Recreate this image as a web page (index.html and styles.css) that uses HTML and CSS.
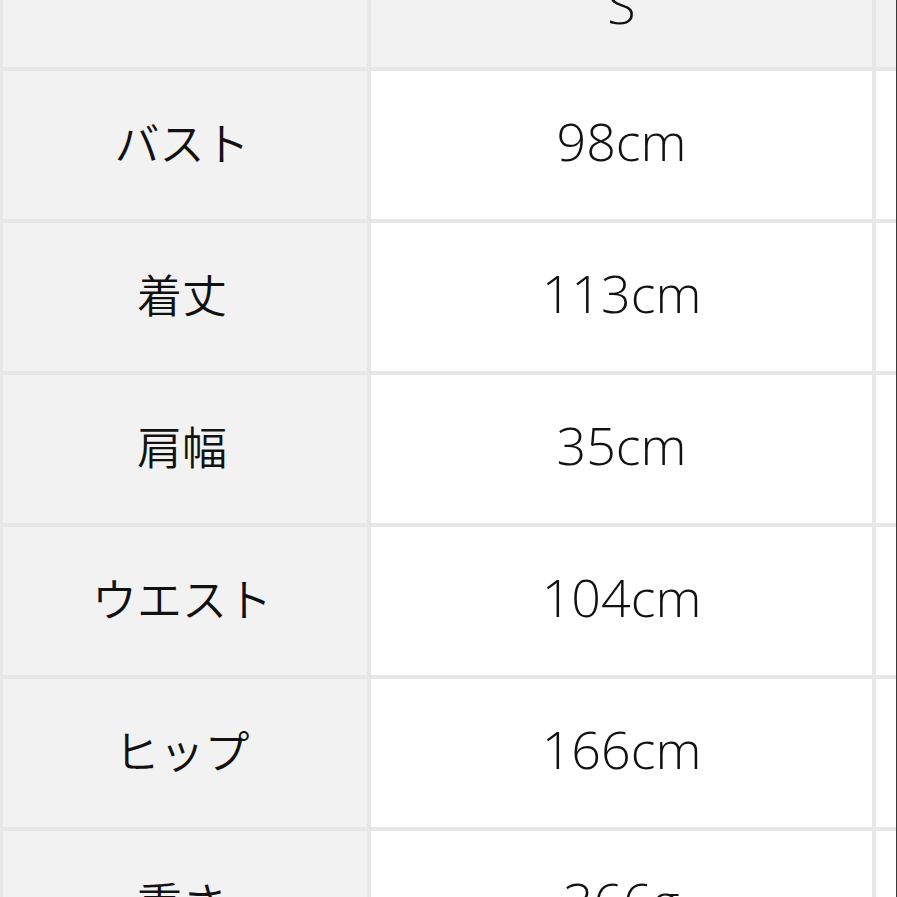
FILE: index.html
```html
<!DOCTYPE html>
<html lang="ja">
<head>
<meta charset="utf-8">
<title>サイズ表</title>
<link rel="stylesheet" href="styles.css">
</head>
<body>
<div class="sheet">
  <div class="cell label head"></div>
  <div class="cell value head">S</div>
  <div class="cell extra head"></div>

  <div class="cell label">バスト</div>
  <div class="cell value">98cm</div>
  <div class="cell extra"></div>

  <div class="cell label">着丈</div>
  <div class="cell value">113cm</div>
  <div class="cell extra"></div>

  <div class="cell label">肩幅</div>
  <div class="cell value">35cm</div>
  <div class="cell extra"></div>

  <div class="cell label">ウエスト</div>
  <div class="cell value">104cm</div>
  <div class="cell extra"></div>

  <div class="cell label">ヒップ</div>
  <div class="cell value">166cm</div>
  <div class="cell extra"></div>

  <div class="cell label">重さ</div>
  <div class="cell value">366g</div>
  <div class="cell extra"></div>
</div>
</body>
</html>
```

FILE: styles.css
```css
html, body {
  margin: 0;
  padding: 0;
  background: #ffffff;
  overflow: hidden;
  width: 897px;
  height: 897px;
}

.sheet {
  margin-top: -56px;
  display: grid;
  grid-template-columns: 364px 501px 1fr;
  grid-template-rows: 123px repeat(6, 148px);
  gap: 4px;
  padding-left: 3px;
  background: #e7e7e7;
  border-right: 1px solid #3a3a3a;
  box-sizing: border-box;
  width: 897px;
  color: #111111;
}

.cell {
  display: flex;
  align-items: center;
  justify-content: center;
  background: #ffffff;
  line-height: 1;
  box-sizing: border-box;
}

.label {
  background: #f2f2f2;
  font-family: "Noto Sans CJK JP", "Noto Sans", sans-serif;
  font-size: 45px;
  font-weight: 350;
  padding-bottom: 8px;
  padding-right: 6px;
}

.value {
  font-family: "Open Sans", "Noto Sans CJK JP", sans-serif;
  font-size: 52px;
  font-weight: 300;
  padding-bottom: 8px;
}

.head {
  background: #f2f2f2;
}

.value.head {
  padding-bottom: 4px;
}
```
